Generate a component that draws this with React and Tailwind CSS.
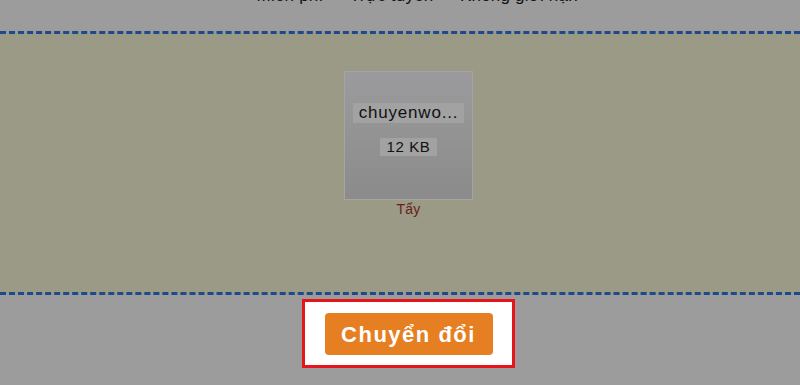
import React from 'react';

const features = ['Miễn phí', 'Trực tuyến', 'Không giới hạn'];

const FileCard = ({ name, size, onRemove }) => (
  <div className="flex flex-col items-center">
    <div className="w-[129px] h-[129px] border border-[#a4a4a4] bg-gradient-to-b from-[#9b9b9d] to-[#8b8b8b] flex flex-col items-center pt-[31px]">
      <div className="bg-[#a2a2a2] px-[6px] h-[20px] leading-[20px] text-[17px] text-[#111] tracking-[0.8px]">{name}</div>
      <div className="bg-[#a2a2a2] px-[7px] h-[18px] leading-[18px] text-[15px] text-[#111] mt-[15px] tracking-[0.6px]">{size}</div>
    </div>
    <button onClick={onRemove} className="text-[14px] leading-[16px] text-[#6a1c18] mt-[1px] tracking-[0.3px]">Tẩy</button>
  </div>
);

export default function App() {
  return (
    <div className="w-[800px] h-[385px] overflow-hidden bg-[#9c9c9c] font-['Liberation_Sans',Arial,sans-serif]">
      <div className="h-[31px] overflow-hidden">
        <div className="flex justify-center gap-[12px] -mt-[13px] ml-[20px] text-[17px] leading-[18px] text-[#111] tracking-[0.2px]">
          {features.map((f) => (
            <span key={f} className="flex items-center gap-[10px]">
              <span className="text-[7px] text-[#444]">●</span>
              {f}
            </span>
          ))}
        </div>
      </div>
      <div className="h-[264px] bg-[#9a9a87] border-y-[3px] border-dashed border-[#1d4a8f] flex justify-center pt-[37px] pl-[17px]">
        <FileCard name="chuyenwo..." size="12 KB" />
      </div>
      <div className="flex justify-center pt-[4px] pl-[17px]">
        <div className="w-[213px] h-[69px] border-[3px] border-[#e8141b] bg-white flex items-center justify-center">
          <button className="w-[168px] h-[42px] rounded-[4px] bg-[#e67e22] text-white font-bold text-[22px] tracking-[1.5px] mt-[1px]">
            Chuyển đổi
          </button>
        </div>
      </div>
    </div>
  );
}
